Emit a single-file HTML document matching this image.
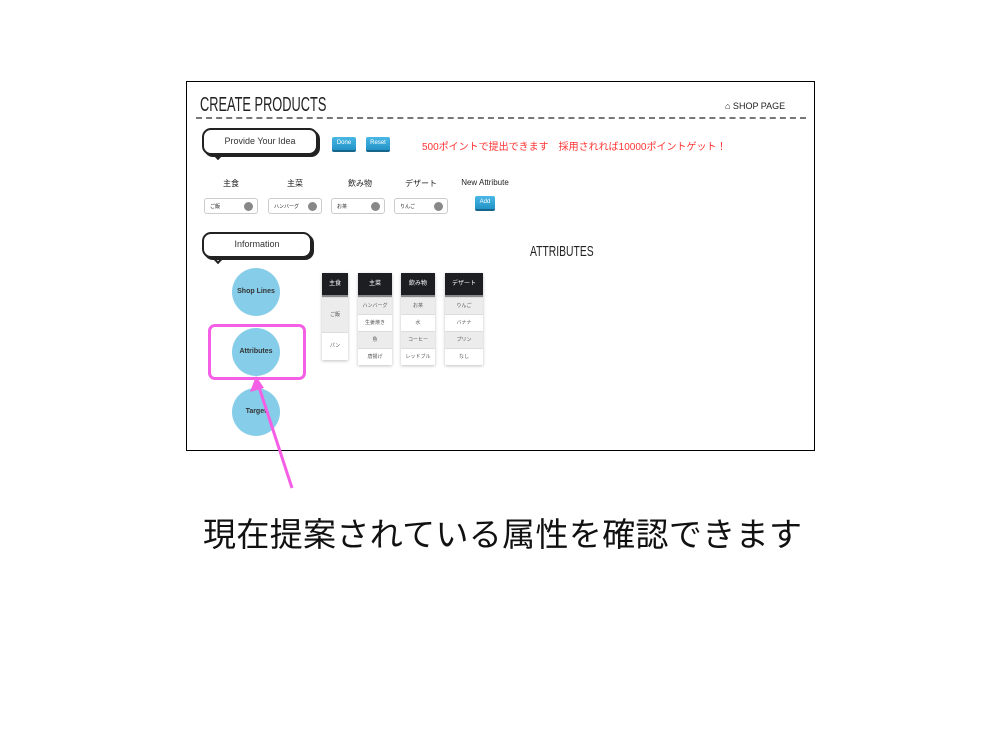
<!DOCTYPE html>
<html><head><meta charset="utf-8"><style>
body{margin:0;width:1000px;height:750px;background:#fff;position:relative;overflow:hidden;font-family:"Liberation Sans","Noto Sans CJK JP",sans-serif;color:#222}
.a{position:absolute}
.frame{left:186px;top:81px;width:627px;height:368px;border:1px solid #000}
.title{left:200px;top:94px;font-family:"Liberation Sans Narrow","Liberation Sans",sans-serif;font-size:20px;transform:scaleX(.64);transform-origin:left;color:#222}
.dash{left:196px;top:117px;width:610px;border-top:2px dashed #777}
.bub{border:2px solid #222;border-radius:9px;background:#fff;box-shadow:2px 2px 0 #222;font-size:9px;text-align:center;color:#333}
.tail{width:8px;height:8px;background:#fff;border-right:2px solid #222;border-bottom:2px solid #222;transform:rotate(45deg)}
.btn{background:linear-gradient(#49b8e6,#2393c7);border-bottom:2px solid #16658c;border-radius:2px;color:#fff;font-size:6px;text-align:center}
.lbl{font-size:8px;text-align:center}
.sel{border:1px solid #ccc;border-radius:3px;height:16px;font-size:5px;line-height:16px;padding-left:5px;box-sizing:border-box}
.sel i{position:absolute;right:4px;top:3px;width:9px;height:9px;border-radius:50%;background:#888}
.circ{width:48px;height:48px;border-radius:50%;background:#86cde9;font-size:7px;font-weight:bold;line-height:48px;text-align:center;color:#333}
.col{box-shadow:0 1px 3px rgba(0,0,0,.25);background:#fff}
.col .h{background:#1c1e22;color:#fff;font-size:6px;text-align:center;height:22px;line-height:22px;border-bottom:2px solid #888}
.col .r{font-size:5px;color:#555;text-align:center;height:16px;line-height:16px;border-top:1px solid #ddd}
.g{background:#ececec}
</style></head><body>
<div class="a frame"></div>
<div class="a title">CREATE PRODUCTS</div>
<div class="a" style="left:725px;top:101px;font-size:9px">&#x2302; SHOP PAGE</div>
<div class="a dash"></div>

<div class="a tail" style="left:213px;top:148px"></div>
<div class="a bub" style="left:202px;top:128px;width:112px;height:23px;line-height:22px">Provide Your Idea</div>
<div class="a btn" style="left:332px;top:137px;width:24px;height:13px;line-height:13px">Done</div>
<div class="a btn" style="left:366px;top:137px;width:24px;height:13px;line-height:13px">Reset</div>
<div class="a" style="left:422px;top:138px;font-size:10px;color:#f33">500ポイントで提出できます　採用されれば10000ポイントゲット！</div>

<div class="a lbl" style="left:216px;top:178px;width:30px">主食</div>
<div class="a lbl" style="left:280px;top:178px;width:30px">主菜</div>
<div class="a lbl" style="left:340px;top:178px;width:40px">飲み物</div>
<div class="a lbl" style="left:401px;top:178px;width:40px">デザート</div>
<div class="a lbl" style="left:455px;top:178px;width:60px">New Attribute</div>
<div class="a sel" style="left:204px;top:198px;width:54px">ご飯<i></i></div>
<div class="a sel" style="left:268px;top:198px;width:54px">ハンバーグ<i></i></div>
<div class="a sel" style="left:331px;top:198px;width:54px">お茶<i></i></div>
<div class="a sel" style="left:394px;top:198px;width:54px">りんご<i></i></div>
<div class="a btn" style="left:475px;top:196px;width:20px;height:13px;line-height:12px">Add</div>

<div class="a tail" style="left:213px;top:252px"></div>
<div class="a bub" style="left:202px;top:232px;width:106px;height:22px;line-height:21px">Information</div>

<div class="a circ" style="left:232px;top:268px">Shop Lines</div>
<div class="a circ" style="left:232px;top:328px">Attributes</div>
<div class="a circ" style="left:232px;top:388px">Target</div>

<div class="a" style="left:530px;top:243px;font-size:15px;transform:scaleX(.69);transform-origin:left;font-family:'Liberation Sans Narrow','Liberation Sans',sans-serif">ATTRIBUTES</div>

<div class="a col" style="left:322px;top:273px;width:26px">
<div class="h">主食</div><div class="r g" style="height:34px;line-height:34px">ご飯</div><div class="r" style="height:27px;line-height:27px">パン</div></div>
<div class="a col" style="left:358px;top:273px;width:34px">
<div class="h">主菜</div><div class="r g">ハンバーグ</div><div class="r">生姜焼き</div><div class="r g">魚</div><div class="r">唐揚げ</div></div>
<div class="a col" style="left:401px;top:273px;width:34px">
<div class="h">飲み物</div><div class="r g">お茶</div><div class="r">水</div><div class="r g">コーヒー</div><div class="r">レッドブル</div></div>
<div class="a col" style="left:445px;top:273px;width:38px">
<div class="h">デザート</div><div class="r g">りんご</div><div class="r">バナナ</div><div class="r g">プリン</div><div class="r">なし</div></div>

<div class="a" style="left:208px;top:324px;width:92px;height:50px;border:3px solid #f55fe6;border-radius:7px"></div>
<svg class="a" style="left:0;top:0" width="1000" height="750">
<line x1="292" y1="488" x2="258" y2="384" stroke="#f55fe6" stroke-width="3"/>
<polygon points="256,376 250,392 264,388" fill="#f55fe6"/>
</svg>
<div class="a" style="left:203px;top:508px;font-size:33px;color:#111;letter-spacing:0.35px">現在提案されている属性を確認できます</div>
</body></html>
